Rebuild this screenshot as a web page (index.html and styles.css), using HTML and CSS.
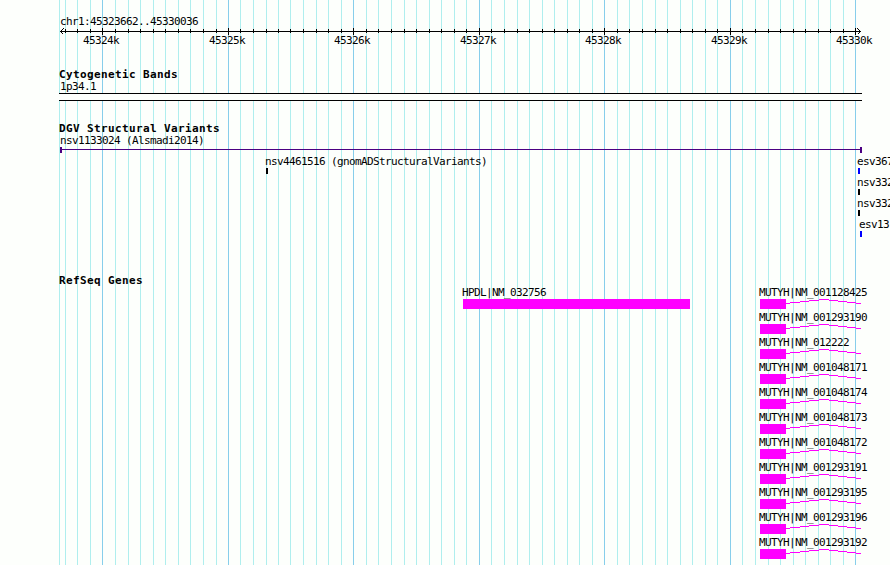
FILE: index.html
```html
<!DOCTYPE html>
<html lang="en">
<head>
    <meta charset="UTF-8">
    <meta name="viewport" content="width=device-width, initial-scale=1.0">
    <link rel="stylesheet" href="styles.css">
    <title>chr1:45323662..45330036</title>
</head>
<body>

<div id="browser">
    <svg id="grid" width="890" height="565"></svg>

    <div class="track ruler">
        <div class="label">chr1:45323662..45330036</div>
        <svg id="axis" width="830" height="9"></svg>
        <div id="ticks"></div>
    </div>

    <div class="track cyto">
        <h2>Cytogenetic Bands</h2>
        <div class="label">1p34.1</div>
        <div class="band"></div>
    </div>

    <div class="track dgv">
        <h2>DGV Structural Variants</h2>
        <div class="label">nsv1133024 (Alsmadi2014)</div>
        <div class="span"></div>
        <div id="variants"></div>
    </div>

    <div class="track refseq">
        <h2>RefSeq Genes</h2>
        <div class="genes">
            <div class="gene hpdl">
                <div class="label">HPDL|NM_032756</div>
                <div class="exon"></div>
            </div>
            <div id="mutyh"></div>
        </div>
    </div>
</div>

<script>
    // kilobase positions, in pixels
    const major = [102, 228, 353, 479, 604, 730, 855];
    const minor = [
        65, 77, 90, 115, 128, 140, 153, 165, 178, 190, 203, 216,
        240, 253, 266, 278, 290, 303, 316, 328, 341,
        366, 378, 391, 404, 416, 429, 441, 454, 466,
        491, 504, 517, 529, 542, 554, 567, 579, 592,
        617, 629, 642, 655, 667, 680, 692, 705, 717,
        742, 755, 768, 780, 793, 805, 818, 830, 843
    ];

    function rect(x, y, w, h, cls) {
        return `<rect class="${cls}" x="${x}" y="${y}" width="${w}" height="${h}"/>`;
    }

    document.getElementById('grid').innerHTML =
        [59, ...minor].map(x => rect(x, 0, 1, 565, 'minor')).join('') +
        major.map(x => rect(x, 0, 1, 565, 'major')).join('');

    // the axis svg starts at x = 59, y = 27
    document.getElementById('axis').innerHTML =
        rect(1, 4, 801, 1, 'ink') +
        minor.map(x => rect(x - 59, 2, 1, 4, 'ink')).join('') +
        major.map(x => rect(x - 59, 1, 1, 7, 'ink')).join('') +
        '<path class="arrow" d="M4.5 1.5L1.5 4.5L4.5 7.5M798.5 1.5L801.5 4.5L798.5 7.5"/>';

    document.getElementById('ticks').innerHTML =
        major.map((x, i) => `<div class="label" style="left: ${x - 59 - 19}px">${45324 + i}k</div>`).join('');

    const variants = [
        [266, 0, 'nsv4461516 (gnomADStructuralVariants)', 'black'],
        [858, 0, 'esv367', 'blue'],
        [858, 1, 'nsv332', 'black'],
        [858, 2, 'nsv332', 'black'],
        [860, 3, 'esv13', 'blue']
    ];
    document.getElementById('variants').innerHTML = variants.map(([x, row, name, color]) =>
        `<div class="variant" style="left: ${x - 59}px; top: ${row * 21}px">
            <div class="label">${name}</div><div class="mark ${color}"></div>
        </div>`).join('');

    const genes = ['001128425', '001293190', '012222', '001048171', '001048174', '001048173',
        '001048172', '001293191', '001293195', '001293196', '001293192'];
    document.getElementById('mutyh').innerHTML = genes.map(id =>
        `<div class="gene">
            <div class="label">MUTYH|NM_${id}</div>
            <div class="model">
                <div class="exon"></div>
                <svg class="intron" width="75" height="10"><path d="M0 4h4v1h-4zM4 3h10v1h-10zM14 2h9v1h-9zM23 1h10v1h-10zM33 0h10v1h-10zM43 1h9v1h-9zM52 2h9v1h-9zM61 3h9v1h-9zM70 4h5v1h-5z"/></svg>
            </div>
        </div>`).join('');
</script>

</body>
</html>
```
FILE: styles.css
```css
body {
    margin: 0;
    background-color: #fdfffc;
    color: #000;
    font-family: "DejaVu Sans Mono", monospace;
}

#browser {
    position: relative;
    box-sizing: border-box;
    width: 890px;
    height: 565px;
    padding: 15px 0 0 59px;
    overflow: hidden;
}

#grid {
    position: absolute;
    left: 0;
    top: 0;
}

svg {
    display: block;
    shape-rendering: crispEdges;
}

.minor {
    fill: #afeeee;
}

.major {
    fill: #87ceeb;
}

.ink {
    fill: #000;
}

.arrow {
    fill: none;
    stroke: #000;
}

.track {
    position: relative;
}

.label {
    height: 12px;
    padding-left: 1px;
    font-size: 11px;
    line-height: 14px;
    letter-spacing: -0.622px;
    white-space: nowrap;
}

h2 {
    height: 12px;
    margin: 0;
    font-size: 11px;
    line-height: 14px;
    letter-spacing: 0.378px;
    white-space: nowrap;
}

.ruler {
    height: 53px;
}

#ticks {
    position: relative;
    margin-top: -2px;
}

#ticks .label {
    position: absolute;
    padding: 0;
}

.cyto {
    height: 54px;
}

.band {
    width: 803px;
    height: 6px;
    margin-top: 1px;
    border-top: 1px solid #000;
    border-bottom: 1px solid #000;
    background-color: #fdfffc;
}

.dgv {
    height: 152px;
}

.span {
    box-sizing: border-box;
    width: 802px;
    height: 6px;
    margin: 1px 0 0 1px;
    border: solid #4b0082;
    border-width: 0 2px;
    background: linear-gradient(#4b0082, #4b0082) 0 2px / 100% 1px no-repeat;
}

#variants {
    position: relative;
    margin-top: 2px;
}

.variant {
    position: absolute;
}

.variant .label {
    margin-left: -1px;
    padding: 0;
}

.mark {
    width: 2px;
    height: 6px;
    margin-top: 1px;
}

.black {
    background-color: #000;
}

.blue {
    background-color: #00f;
}

.genes {
    display: flex;
    padding-left: 403px;
}

.hpdl {
    width: 297px;
}

.gene {
    height: 25px;
}

.gene .label {
    padding: 0;
}

.exon {
    width: 26px;
    height: 10px;
    background-color: #f0f;
}

.hpdl .exon {
    width: 227px;
    margin: 1px 0 0 1px;
}

.model {
    display: flex;
    padding: 1px 0 0 1px;
}

.intron {
    fill: #f0f;
}
```
